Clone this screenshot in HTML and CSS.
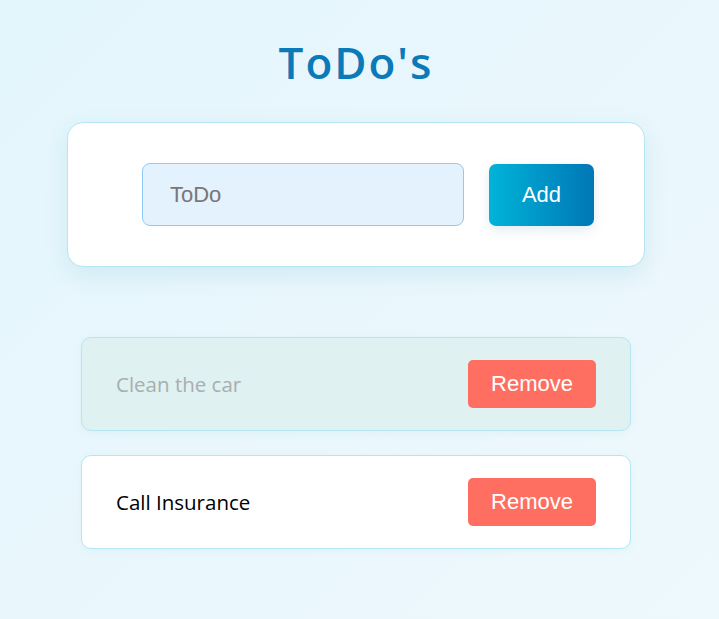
FILE: index.html
```html
<!DOCTYPE html>
<html lang="en">
<head>
<meta charset="utf-8">
<title>ToDo's</title>
<link rel="stylesheet" href="styles.css">
</head>
<body>
<main class="app">
  <h1 class="title">ToDo's</h1>
  <form class="todo-form">
    <input class="todo-input" type="text" placeholder="ToDo">
    <button class="add-btn" type="button">Add</button>
  </form>
  <ul class="todo-list">
    <li class="todo-item done">
      <span class="todo-text">Clean the car</span>
      <button class="remove-btn" type="button">Remove</button>
    </li>
    <li class="todo-item">
      <span class="todo-text">Call Insurance</span>
      <button class="remove-btn" type="button">Remove</button>
    </li>
  </ul>
</main>
</body>
</html>
```
FILE: styles.css
```css
html, body {
  margin: 0;
  height: 100%;
}
body {
  background: linear-gradient(135deg, #e3f6fc 0%, #eaf7fc 60%, #eef9fc 100%);
  font-family: "Open Sans", "Noto Sans", sans-serif;
  padding-right: 7px;
  box-sizing: border-box;
}
.app {
  display: flex;
  flex-direction: column;
  align-items: center;
  padding-top: 31px;
}
.title {
  margin: 0;
  font-size: 44px;
  font-weight: 600;
  letter-spacing: 2px;
  color: #0b7ab8;
  line-height: 63px;
}
.todo-form {
  margin-top: 28px;
  width: 578px;
  box-sizing: border-box;
  background: #fff;
  border: 1px solid #b5e6f2;
  border-radius: 16px;
  box-shadow: 0 8px 24px rgba(0, 120, 160, 0.10);
  padding: 40px 50px 40px 74px;
  display: flex;
  gap: 25px;
}
.todo-input {
  width: 322px;
  height: 63px;
  box-sizing: border-box;
  background: #e3f2fd;
  border: 1px solid #90caf9;
  border-radius: 8px;
  padding: 0 27px;
  font-family: "Liberation Sans", Arial, sans-serif;
  font-size: 22px;
  color: #333;
  outline: none;
}
.todo-input::placeholder {
  color: #777;
}
.add-btn {
  width: 105px;
  height: 62px;
  margin-top: 1px;
  border: none;
  border-radius: 7px;
  background: linear-gradient(90deg, #00b4d8 0%, #0077b6 100%);
  color: #fff;
  font-family: "Liberation Sans", Arial, sans-serif;
  font-size: 22px;
  box-shadow: 0 4px 12px rgba(0, 100, 150, 0.12);
}
.todo-list {
  list-style: none;
  margin: 70px 0 0;
  padding: 0;
  display: flex;
  flex-direction: column;
  gap: 24px;
}
.todo-item {
  width: 550px;
  height: 94px;
  box-sizing: border-box;
  display: flex;
  align-items: center;
  justify-content: space-between;
  padding: 0 34px 0 34px;
  background: #fff;
  border: 1px solid #b5e6f2;
  border-radius: 10px;
  box-shadow: 0 2px 8px rgba(0, 120, 160, 0.05);
}
.todo-item.done {
  background: #dff1f1;
}
.todo-text {
  font-size: 20.5px;
  color: #000;
}
.todo-item.done .todo-text {
  color: #a9aeae;
}
.remove-btn {
  width: 128px;
  height: 48px;
  border: none;
  border-radius: 5px;
  background: #ff6f61;
  color: #fff;
  font-family: "Liberation Sans", Arial, sans-serif;
  font-size: 22px;
}
```
